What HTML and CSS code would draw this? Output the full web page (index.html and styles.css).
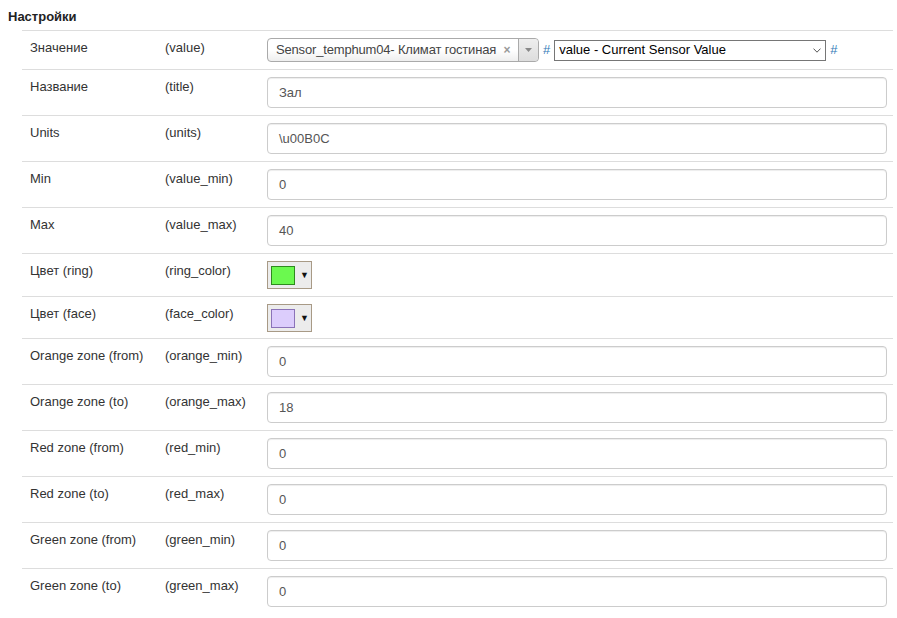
FILE: index.html
```html
<!DOCTYPE html>
<html>
<head>
<meta charset="utf-8">
<link rel="stylesheet" href="styles.css">
</head>
<body>
<div class="title">Настройки</div>
<table class="settings">
  <colgroup><col class="c1"><col class="c2"><col class="c3"></colgroup>
  <tr class="row-top">
    <td>Значение</td><td>(value)</td>
    <td>
      <div class="value-line">
        <div class="s2">
          <span class="s2-text">Sensor_temphum04- Климат гостиная</span>
          <span class="s2-clear">×</span>
          <span class="s2-arrow"><svg width="7" height="4" viewBox="0 0 7 4"><path d="M0 0h7L3.5 4z" fill="#888"/></svg></span>
        </div>
        <span class="hash">#</span>
        <div class="native">
          <span>value - Current Sensor Value</span>
          <svg width="8" height="5" viewBox="0 0 8 5"><path d="M0.5 0.6L4 4.2L7.5 0.6" fill="none" stroke="#555" stroke-width="1"/></svg>
        </div>
        <span class="hash">#</span>
      </div>
    </td>
  </tr>
  <tr><td>Название</td><td>(title)</td><td><div class="inp">Зал</div></td></tr>
  <tr><td>Units</td><td>(units)</td><td><div class="inp">\u00B0C</div></td></tr>
  <tr><td>Min</td><td>(value_min)</td><td><div class="inp">0</div></td></tr>
  <tr><td>Max</td><td>(value_max)</td><td><div class="inp">40</div></td></tr>
  <tr><td>Цвет (ring)</td><td>(ring_color)</td><td><div class="picker"><span class="swatch green"></span><span class="tri">▼</span></div></td></tr>
  <tr class="short"><td>Цвет (face)</td><td>(face_color)</td><td><div class="picker"><span class="swatch lav"></span><span class="tri">▼</span></div></td></tr>
  <tr><td>Orange zone (from)</td><td>(orange_min)</td><td><div class="inp">0</div></td></tr>
  <tr><td>Orange zone (to)</td><td>(orange_max)</td><td><div class="inp">18</div></td></tr>
  <tr><td>Red zone (from)</td><td>(red_min)</td><td><div class="inp">0</div></td></tr>
  <tr><td>Red zone (to)</td><td>(red_max)</td><td><div class="inp">0</div></td></tr>
  <tr><td>Green zone (from)</td><td>(green_min)</td><td><div class="inp">0</div></td></tr>
  <tr><td>Green zone (to)</td><td>(green_max)</td><td><div class="inp">0</div></td></tr>
</table>
</body>
</html>
```

FILE: styles.css
```css
html, body {
  margin: 0;
  padding: 0;
  background: #fff;
}
body {
  font-family: "Liberation Sans", Arial, sans-serif;
  font-size: 13px;
  color: #333;
}
.title {
  font-weight: bold;
  line-height: 18px;
  padding: 8px 8px 0 8px;
  color: #222;
}
.settings {
  margin: 4px 0 0 22px;
  width: 871px;
  border-collapse: collapse;
  table-layout: fixed;
}
.c1 { width: 135px; }
.c2 { width: 102px; }
.settings td {
  border-top: 1px solid #ddd;
  padding: 7px 8px;
  line-height: 20px;
  vertical-align: top;
  white-space: nowrap;
}
.settings tr.short td { padding-bottom: 6px; }
.inp {
  box-sizing: border-box;
  width: 620px;
  height: 31px;
  border: 1px solid #ccc;
  border-radius: 4px;
  padding: 5px 11px;
  color: #555;
  line-height: 19px;
  box-shadow: inset 0 1px 1px rgba(0,0,0,0.075);
}
.value-line {
  display: flex;
  align-items: center;
  height: 24px;
}
.s2 {
  box-sizing: border-box;
  width: 272px;
  height: 24px;
  border: 1px solid #aaa;
  border-radius: 4px;
  background: linear-gradient(to bottom, #fff 0%, #fff 50%, #eee 100%);
  display: flex;
  align-items: center;
  color: #444;
}
.s2-text {
  flex: 1;
  padding-left: 8px;
  line-height: 22px;
  letter-spacing: -0.17px;
}
.s2-clear {
  color: #999;
  font-weight: bold;
  font-size: 12px;
  width: 14px;
  margin-right: 4px;
  text-align: center;
}
.s2-arrow {
  width: 19px;
  height: 22px;
  border-left: 1px solid #aaa;
  border-radius: 0 4px 4px 0;
  background: linear-gradient(to bottom, #eee 0%, #ddd 100%);
  display: flex;
  align-items: center;
  justify-content: center;
}
.hash {
  color: #337ab7;
  margin: 0 4px;
  font-size: 13px;
}
.native {
  box-sizing: border-box;
  width: 272px;
  height: 21px;
  border: 1px solid #767676;
  display: flex;
  align-items: center;
  justify-content: space-between;
  padding: 0 4px 0 4px;
  color: #000;
  background: #fff;
}
.picker {
  box-sizing: border-box;
  width: 45px;
  height: 28px;
  border: 1px solid #a89a86;
  background: #ececec;
  display: flex;
  align-items: center;
  padding-left: 3px;
}
.swatch {
  box-sizing: border-box;
  width: 24px;
  height: 19px;
  border: 1px solid;
}
.swatch.green { background: #6bf94f; border-color: #2e8a1e; }
.swatch.lav { background: #dccdfc; border-color: #8b73b8; }
.tri {
  font-size: 9px;
  color: #111;
  margin-left: 5px;
}
```
